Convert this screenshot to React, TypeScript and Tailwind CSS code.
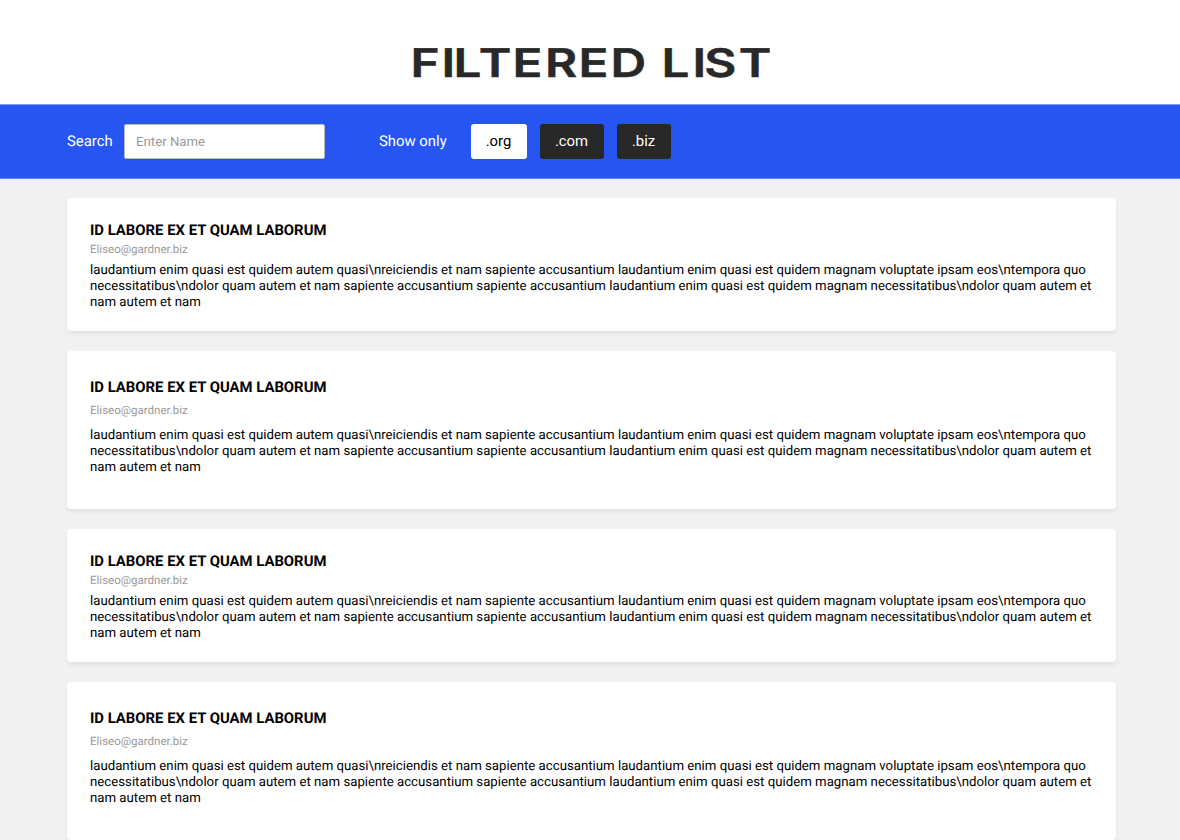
const body = "laudantium enim quasi est quidem autem quasi\\nreiciendis et nam sapiente accusantium laudantium enim quasi est quidem magnam voluptate ipsam eos\\ntempora quo necessitatibus\\ndolor quam autem et nam sapiente accusantium sapiente accusantium laudantium enim quasi est quidem magnam necessitatibus\\ndolor quam autem et nam autem et nam";

function Card({ roomy }: { roomy?: boolean }) {
  return (
    <article className={`w-[1049px] shrink-0 rounded-[4px] bg-white px-[23px] shadow-[0_3px_4px_rgba(0,0,0,0.06)] ${roomy ? "h-[158px] pt-[28px]" : "h-[133px] pt-[24px]"}`}>
      <h2 className="text-[14.86px] leading-[17px] font-bold uppercase">Id labore ex et quam laborum</h2>
      <p className={`text-[11.5px] leading-[14px] text-[#999] ${roomy ? "mt-[7px]" : "mt-[3px]"}`}>Eliseo@gardner.biz</p>
      <p className={`text-[13.22px] leading-[15.75px] ${roomy ? "mt-[11px]" : "mt-[7px]"}`}>{body}</p>
    </article>
  );
}

export default function App() {
  return (
    <div className="flex h-[840px] w-[1180px] flex-col overflow-hidden bg-[#f1f1f1] font-['Roboto',sans-serif] text-black [text-rendering:geometricPrecision]">
      <header className="flex h-[104px] shrink-0 justify-center bg-white pt-[36px]">
        <svg width="360" height="52" className="overflow-visible">
          <text transform="scale(1.25 1)" x="0.4 25.2 34.8 55.1 82 108 134.8 160.4 185 201.2 226 235.4 263.1" y="41.2" fill="#282828" stroke="#282828" strokeWidth="0.5" fontSize="39.5" fontWeight="600" fontFamily="Inter, sans-serif">FILTERED LIST</text>
        </svg>
      </header>
      <div className="flex h-[75px] shrink-0 items-center border-t border-b border-t-[#7c97f7] border-b-[#6484f2] bg-[#2655f2] pl-[67px] text-[14.86px] text-white">
        <label htmlFor="name" className="w-[57px]">Search</label>
        <input id="name" placeholder="Enter Name" className="h-[35px] w-[201px] rounded-[2px] border border-[#bbb] bg-white px-[11px] text-[13.22px] text-black placeholder:text-[#999]" />
        <span className="ml-[54px] w-[92px]">Show only</span>
        <div className="flex gap-[13px]">
          <button className="h-[35px] w-[56px] rounded-[3px] bg-white pr-[1px] text-black">.org</button>
          <button className="h-[35px] w-[64px] rounded-[3px] bg-[#282828] pr-[1px]">.com</button>
          <button className="h-[35px] w-[54px] rounded-[3px] bg-[#282828] pr-[1px]">.biz</button>
        </div>
      </div>
      <main className="flex flex-col gap-[20px] pt-[19px] pl-[67px]">
        <Card />
        <Card roomy />
        <Card />
        <Card roomy />
      </main>
    </div>
  );
}
